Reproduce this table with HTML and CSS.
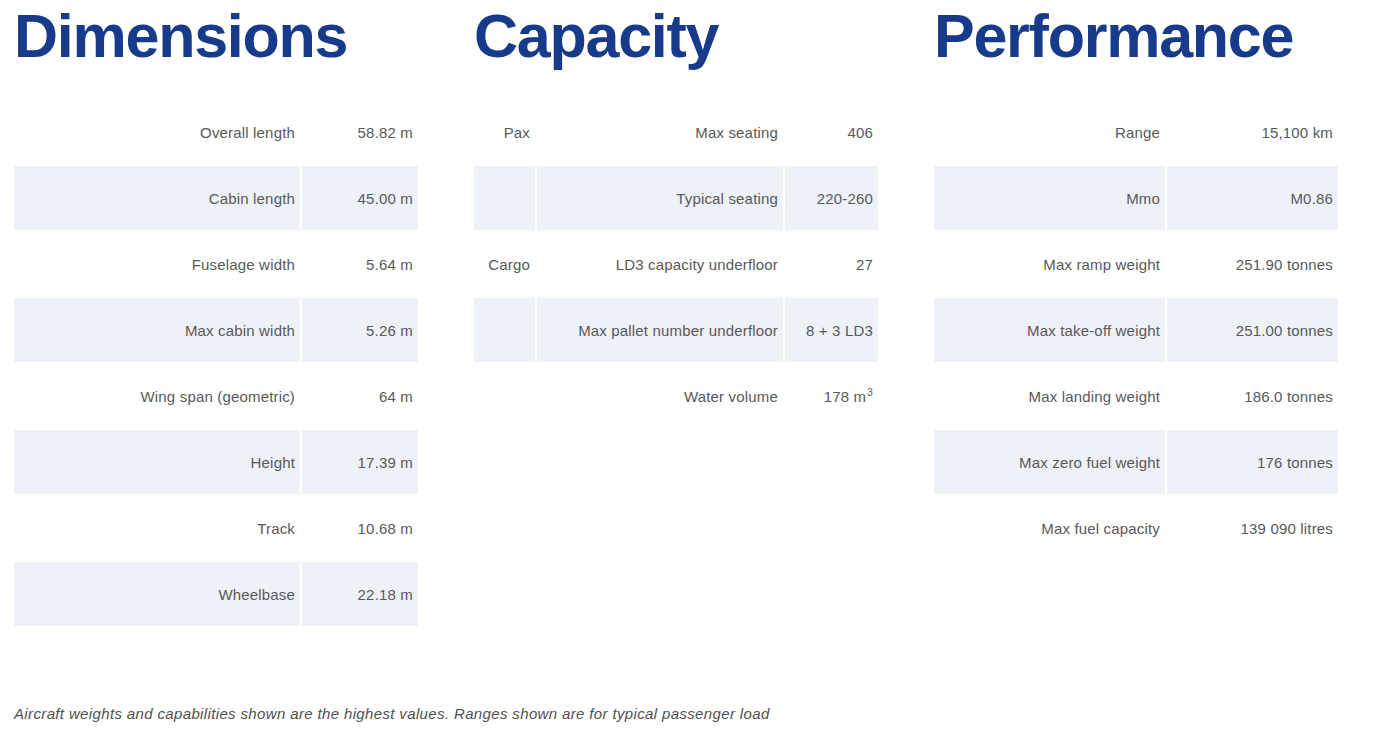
FILE: index.html
```html
<!DOCTYPE html>
<html lang="en">
<head>
<meta charset="utf-8">
<title>Specifications</title>
<link rel="stylesheet" href="styles.css">
</head>
<body>
<main class="page">
  <div class="sections">
    <section class="section">
      <h2 class="title">Dimensions</h2>
      <div class="table dims">
        <div class="row"><div class="cell">Overall length</div><div class="cell">58.82 m</div></div>
        <div class="row shaded"><div class="cell">Cabin length</div><div class="cell">45.00 m</div></div>
        <div class="row"><div class="cell">Fuselage width</div><div class="cell">5.64 m</div></div>
        <div class="row shaded"><div class="cell">Max cabin width</div><div class="cell">5.26 m</div></div>
        <div class="row"><div class="cell">Wing span (geometric)</div><div class="cell">64 m</div></div>
        <div class="row shaded"><div class="cell">Height</div><div class="cell">17.39 m</div></div>
        <div class="row"><div class="cell">Track</div><div class="cell">10.68 m</div></div>
        <div class="row shaded"><div class="cell">Wheelbase</div><div class="cell">22.18 m</div></div>
      </div>
    </section>
    <section class="section">
      <h2 class="title">Capacity</h2>
      <div class="table cap">
        <div class="row"><div class="cell">Pax</div><div class="cell">Max seating</div><div class="cell">406</div></div>
        <div class="row shaded"><div class="cell"></div><div class="cell">Typical seating</div><div class="cell">220-260</div></div>
        <div class="row"><div class="cell">Cargo</div><div class="cell">LD3 capacity underfloor</div><div class="cell">27</div></div>
        <div class="row shaded"><div class="cell"></div><div class="cell">Max pallet number underfloor</div><div class="cell">8 + 3 LD3</div></div>
        <div class="row"><div class="cell"></div><div class="cell">Water volume</div><div class="cell"><span>178 m<sup>3</sup></span></div></div>
      </div>
    </section>
    <section class="section">
      <h2 class="title">Performance</h2>
      <div class="table perf">
        <div class="row"><div class="cell">Range</div><div class="cell">15,100 km</div></div>
        <div class="row shaded"><div class="cell">Mmo</div><div class="cell">M0.86</div></div>
        <div class="row"><div class="cell">Max ramp weight</div><div class="cell">251.90 tonnes</div></div>
        <div class="row shaded"><div class="cell">Max take-off weight</div><div class="cell">251.00 tonnes</div></div>
        <div class="row"><div class="cell">Max landing weight</div><div class="cell">186.0 tonnes</div></div>
        <div class="row shaded"><div class="cell">Max zero fuel weight</div><div class="cell">176 tonnes</div></div>
        <div class="row"><div class="cell">Max fuel capacity</div><div class="cell">139 090 litres</div></div>
      </div>
    </section>
  </div>
  <p class="note">Aircraft weights and capabilities shown are the highest values. Ranges shown are for typical passenger load</p>
</main>
</body>
</html>
```

FILE: styles.css
```css
* { box-sizing: border-box; }
html, body { margin: 0; padding: 0; background: #fff; }
body {
  font-family: "Liberation Sans", Arial, sans-serif;
  color: #595959;
}
.page {
  padding: 1px 0 0 14px;
  width: 1398px;
  height: 736px;
}
.sections {
  display: grid;
  grid-template-columns: 404px 404px 404px;
  column-gap: 56px;
  height: 626px;
}
.title {
  margin: 0 0 29px 0;
  font-size: 61px;
  line-height: 70px;
  font-weight: 700;
  letter-spacing: -1.25px;
  color: #183a8a;
}
.table {
  display: flex;
  flex-direction: column;
  row-gap: 2px;
}
.row {
  display: grid;
  column-gap: 2px;
  height: 64px;
}
.dims .row { grid-template-columns: 286px 116px; }
.cap .row { grid-template-columns: 61px 246px 93px; }
.perf .row { grid-template-columns: 231px 171px; }
.cell {
  display: flex;
  align-items: center;
  justify-content: flex-end;
  padding: 2px 5px 0 0;
  font-size: 15px;
  line-height: 18px;
  letter-spacing: 0.17px;
  white-space: nowrap;
}
.shaded .cell { background: #eef1f8; }
.cell sup {
  font-size: 10px;
  line-height: 0;
  vertical-align: 6px;
  margin-left: 1px;
}
.note {
  margin: 78px 0 0 0;
  font-size: 15px;
  line-height: 18px;
  font-style: italic;
  color: #505050;
  letter-spacing: 0.36px;
}
```
